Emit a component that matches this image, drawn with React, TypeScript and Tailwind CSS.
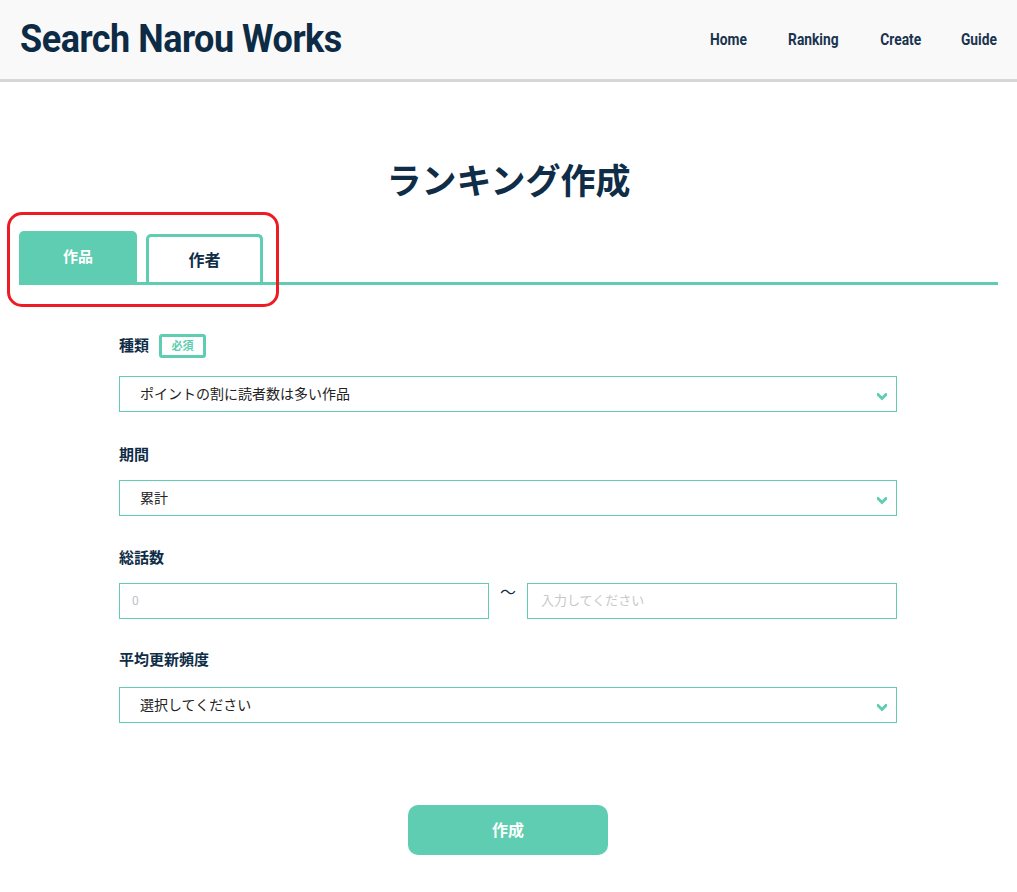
import React from 'react'

const jp = { fontFamily: '"Noto Sans CJK JP", "Noto Sans", sans-serif' }
const rb = { fontFamily: 'Roboto, "Noto Sans", sans-serif' }

const Chevron = () => (
  <svg width="10" height="8" viewBox="0 0 10 8" className="absolute right-[9px] top-[16px]">
    <path d="M1 1.5 L5 5.5 L9 1.5" fill="none" stroke="#5ecdb1" strokeWidth="3" strokeLinecap="square" />
  </svg>
)

const SelectBox = ({ value }: { value: string }) => (
  <div className="relative h-[36px] w-full border border-[#5ecdb1] bg-white flex items-center pl-[20px] pb-[2px] text-[14px] text-[#222]">
    {value}
    <Chevron />
  </div>
)

const Label = ({ children }: { children: React.ReactNode }) => (
  <div className="text-[15px] font-bold text-[#0f2d47] h-[26px] pb-[1px] flex items-center gap-[10px]">{children}</div>
)

export default function App() {
  return (
    <div className="min-h-[892px] bg-white" style={jp}>
      <header className="h-[82px] bg-[#f9f9f9] border-b-[3px] border-[#d6d6d6] flex items-center justify-between pl-[20px] pr-[17px]">
        <h1
          className="text-[38px] font-bold text-[#0d2b45] tracking-[-0.5px] origin-left scale-x-[0.947] whitespace-nowrap"
          style={rb}
        >
          Search Narou Works
        </h1>
        <nav className="flex gap-[34px] text-[16px] font-bold text-[#1a3450]" style={rb}>
          <span className="scale-x-[0.86]">Home</span>
          <span className="scale-x-[0.86]">Ranking</span>
          <span className="scale-x-[0.86]">Create</span>
          <span className="scale-x-[0.86]">Guide</span>
        </nav>
      </header>

      <h2 className="text-center text-[35px] font-bold text-[#0f2d47] mt-[72px] leading-[50px]">ランキング作成</h2>

      <div className="relative mx-[19px] mt-[27px]">
        <div className="flex items-end gap-[9px] border-b-[3px] border-[#5ecdb1] h-[54px]">
          <div className="w-[118px] h-[51px] bg-[#5ecdb1] rounded-t-[5px] flex items-center justify-center text-white font-bold text-[15px]">
            作品
          </div>
          <div className="w-[117px] h-[48px] border-[3px] border-b-0 border-[#5ecdb1] rounded-t-[5px] bg-white flex items-center justify-center pb-[2px] text-[#0f2d47] font-bold text-[16px]">
            作者
          </div>
        </div>
        <div className="absolute left-[-12px] top-[-19px] w-[272px] h-[95px] border-[3px] border-[#ed1c24] rounded-[15px] pointer-events-none" />
      </div>

      <div className="ml-[119px] w-[778px] mt-[48px]">
        <Label>
          種類
          <span className="border-[3px] border-[#5ecdb1] rounded-[3px] text-[#5ecdb1] text-[11px] font-bold w-[47px] h-[24px] flex items-center justify-center">
            必須
          </span>
        </Label>
        <div className="mt-[17px]">
          <SelectBox value="ポイントの割に読者数は多い作品" />
        </div>

        <div className="mt-[30px]">
          <Label>期間</Label>
        </div>
        <div className="mt-[12px]">
          <SelectBox value="累計" />
        </div>

        <div className="mt-[29px]">
          <Label>総話数</Label>
        </div>
        <div className="mt-[12px] flex items-start">
          <div className="w-[370px] h-[36px] border border-[#5ecdb1] flex items-center pl-[12px] text-[12px] text-[#c0c0c8]" style={rb}>
            0
          </div>
          <div className="w-[38px] text-center text-[16px] text-[#0f2d47] leading-[16px] pt-0">〜</div>
          <div className="w-[370px] h-[36px] border border-[#5ecdb1] flex items-center pl-[13px] pb-[2px] text-[13px] text-[#c8c8c8]">
            入力してください
          </div>
        </div>

        <div className="mt-[28px]">
          <Label>平均更新頻度</Label>
        </div>
        <div className="mt-[14px]">
          <SelectBox value="選択してください" />
        </div>

        <div className="flex justify-center mt-[82px]">
          <button className="w-[200px] h-[50px] pb-[2px] rounded-[10px] bg-[#5ecdb1] text-white font-bold text-[16px]">
            作成
          </button>
        </div>
      </div>
    </div>
  )
}
